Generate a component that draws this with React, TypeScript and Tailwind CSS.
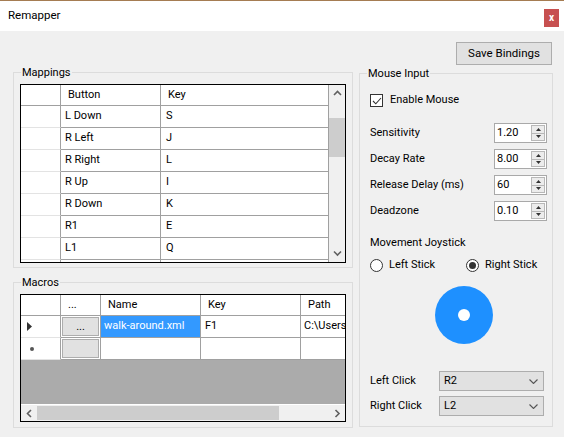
import React from 'react';

const mappings = [
  ['L Down', 'S'],
  ['R Left', 'J'],
  ['R Right', 'L'],
  ['R Up', 'I'],
  ['R Down', 'K'],
  ['R1', 'E'],
  ['L1', 'Q'],
  ['', ''],
];

const spinners = [
  ['Sensitivity', '1.20'],
  ['Decay Rate', '8.00'],
  ['Release Delay (ms)', '60'],
  ['Deadzone', '0.10'],
];

function Chevron({ dir }: { dir: 'up' | 'down' | 'left' | 'right' }) {
  const vert = dir === 'up' || dir === 'down';
  const d = {
    up: 'M1 5 L4.5 1.5 L8 5',
    down: 'M1 1.5 L4.5 5 L8 1.5',
    left: 'M5 1 L1.5 4.5 L5 8',
    right: 'M1.5 1 L5 4.5 L1.5 8',
  }[dir];
  return (
    <svg width={vert ? 9 : 7} height={vert ? 7 : 9} viewBox={vert ? '0 0 9 7' : '0 0 7 9'}>
      <path d={d} fill="none" stroke="#606060" strokeWidth="1.6" />
    </svg>
  );
}

function GroupBox({ title, className, children }: { title: string; className: string; children: React.ReactNode }) {
  return (
    <div className={`relative border border-[#dcdcdc] ${className}`}>
      <span className="absolute -top-[7px] left-[7px] bg-[#f0f0f0] px-px leading-[13px]">{title}</span>
      {children}
    </div>
  );
}

function SpinBox({ value }: { value: string }) {
  return (
    <div className="flex h-[20px] w-[53px] border border-[#a9a9a9] bg-white">
      <span className="flex flex-1 items-center pl-[2px]">{value}</span>
      <div className="my-px mr-px flex w-[14px] flex-col">
        <div className="flex flex-1 items-center justify-center border border-[#b8b8b8] bg-[#ececec]">
          <svg width="5" height="3" viewBox="0 0 5 3"><path d="M0 3 L2.5 0 L5 3 Z" fill="#333" /></svg>
        </div>
        <div className="flex flex-1 items-center justify-center border border-t-0 border-[#b8b8b8] bg-[#ececec]">
          <svg width="5" height="3" viewBox="0 0 5 3"><path d="M0 0 L2.5 3 L5 0 Z" fill="#333" /></svg>
        </div>
      </div>
    </div>
  );
}

function ComboBox({ value }: { value: string }) {
  return (
    <div className="flex h-[20px] w-[105px] items-center justify-between border border-[#adadad] bg-[#e1e1e1] pl-[4px] pr-[5px]">
      <span>{value}</span>
      <svg width="9" height="5" viewBox="0 0 9 5"><path d="M0.5 0.5 L4.5 4.5 L8.5 0.5" fill="none" stroke="#555" strokeWidth="1.1" /></svg>
    </div>
  );
}

function Radio({ label, checked }: { label: string; checked?: boolean }) {
  return (
    <div className="flex items-center gap-[6px]">
      <span className="flex h-[13px] w-[13px] items-center justify-center rounded-full border border-[#333] bg-white">
        {checked && <span className="h-[7px] w-[7px] rounded-full bg-[#333]" />}
      </span>
      <span>{label}</span>
    </div>
  );
}

export default function App() {
  return (
    <div className="h-[437px] w-[564px] overflow-hidden border-t border-[#a57c52] bg-[#f0f0f0] font-['Roboto','Liberation_Sans',sans-serif] text-[11px] text-black">
      {/* Title bar */}
      <div className="flex h-[30px] items-start justify-between bg-white pl-[8px] pr-[5px]">
        <span className="self-center text-[11.5px]">Remapper</span>
        <span className="mt-[8px] flex h-[18px] w-[15px] items-center justify-center bg-[#c75050] text-[10px] font-bold leading-none text-white">x</span>
      </div>

      {/* Toolbar */}
      <div className="flex justify-end pr-[12px] pt-[11px]">
        <button className="h-[23px] w-[96px] border border-[#adadad] bg-[#e1e1e1] text-[11.5px]">Save Bindings</button>
      </div>

      <div className="mt-[7px] flex pl-[13px]">
        {/* Left column */}
        <div className="flex w-[340px] flex-col gap-[14px]">
          <GroupBox title="Mappings" className="h-[196px] pl-[6px] pt-[11px]">
            <div className="flex h-[179px] w-[326px] overflow-hidden border border-black bg-white">
              <div className="flex w-[308px] flex-col">
                <div className="flex h-[21px] shrink-0">
                  <div className="w-[40px] border-b border-r border-[#a0a0a0]" />
                  <div className="flex w-[100px] items-center border-b border-r border-[#a0a0a0] pl-[7px]">Button</div>
                  <div className="flex w-[168px] items-center border-b border-r border-[#a0a0a0] pl-[7px]">Key</div>
                </div>
                {mappings.map(([button, key], i) => (
                  <div key={i} className="flex h-[22px] shrink-0">
                    <div className="w-[40px] border-b border-r border-b-[#e3e3e3] border-r-[#a0a0a0]" />
                    <div className="flex w-[100px] items-center border-b border-r border-[#a0a0a0] pl-[4px]">{button}</div>
                    <div className="flex w-[168px] items-center border-b border-r border-[#a0a0a0] pl-[5px]">{key}</div>
                  </div>
                ))}
              </div>
              <div className="flex w-[16px] flex-col bg-[#f0f0f0]">
                <div className="flex h-[17px] items-center justify-center"><Chevron dir="up" /></div>
                <div className="flex-1">
                  <div className="mt-[16px] h-[39px] bg-[#cdcdcd]" />
                </div>
                <div className="flex h-[17px] items-center justify-center"><Chevron dir="down" /></div>
              </div>
            </div>
          </GroupBox>

          <GroupBox title="Macros" className="h-[146px] pl-[6px] pt-[11px]">
            <div className="flex h-[128px] w-[326px] flex-col overflow-hidden border border-black bg-white">
              <div className="flex h-[21px] shrink-0">
                <div className="w-[40px] shrink-0 border-b border-r border-[#a0a0a0]" />
                <div className="flex w-[40px] shrink-0 items-center border-b border-r border-[#a0a0a0] pl-[7px]">...</div>
                <div className="flex w-[100px] shrink-0 items-center border-b border-r border-[#a0a0a0] pl-[7px]">Name</div>
                <div className="flex w-[100px] shrink-0 items-center border-b border-r border-[#a0a0a0] pl-[7px]">Key</div>
                <div className="flex flex-1 items-center border-b border-[#a0a0a0] pl-[7px]">Path</div>
              </div>
              <div className="flex h-[22px] shrink-0">
                <div className="flex w-[40px] shrink-0 items-center border-b border-r border-b-[#e3e3e3] border-r-[#a0a0a0] pl-[6px]">
                  <svg width="5" height="9" viewBox="0 0 5 9"><path d="M0 0 L5 4.5 L0 9 Z" fill="#333" /></svg>
                </div>
                <div className="flex w-[40px] shrink-0 border-b border-r border-[#a0a0a0] p-px">
                  <div className="flex flex-1 items-center justify-center border border-[#adadad] bg-[#e1e1e1] leading-none">...</div>
                </div>
                <div className="flex w-[100px] shrink-0 items-center border-b border-r border-[#a0a0a0] bg-[#3399ff] pl-[3px] text-white">walk-around.xml</div>
                <div className="flex w-[100px] shrink-0 items-center border-b border-r border-[#a0a0a0] pl-[4px]">F1</div>
                <div className="flex flex-1 items-center overflow-hidden whitespace-nowrap border-b border-[#a0a0a0] pl-[3px]">C:\Users</div>
              </div>
              <div className="flex h-[22px] shrink-0">
                <div className="flex w-[40px] shrink-0 items-center border-b border-r border-b-[#e3e3e3] border-r-[#a0a0a0] pl-[9px]">
                  <span className="h-[4px] w-[4px] rounded-full bg-[#555]" />
                </div>
                <div className="flex w-[40px] shrink-0 border-b border-r border-[#a0a0a0] p-px">
                  <div className="flex-1 border border-[#adadad] bg-[#e1e1e1]" />
                </div>
                <div className="w-[100px] shrink-0 border-b border-r border-[#a0a0a0]" />
                <div className="w-[100px] shrink-0 border-b border-r border-[#a0a0a0]" />
                <div className="flex-1 border-b border-[#a0a0a0]" />
              </div>
              <div className="flex-1 bg-[#ababab]" />
              <div className="flex h-[17px] shrink-0 border-t border-white bg-[#f0f0f0]">
                <div className="flex w-[16px] items-center justify-center"><Chevron dir="left" /></div>
                <div className="flex-1 py-px">
                  <div className="h-full w-[242px] bg-[#cdcdcd]" />
                </div>
                <div className="flex w-[16px] items-center justify-center"><Chevron dir="right" /></div>
              </div>
            </div>
          </GroupBox>
        </div>

        {/* Right column */}
        <GroupBox title="Mouse Input" className="ml-[6px] mt-px flex h-[354px] w-[194px] flex-col pl-[10px]">
          <div className="mt-[20px] flex h-[13px] items-center gap-[7px]">
            <span className="flex h-[13px] w-[13px] items-center justify-center border border-[#333] bg-white">
              <svg width="10" height="8" viewBox="0 0 10 8"><path d="M1 4 L3.8 6.8 L9 1" fill="none" stroke="#333" strokeWidth="1.1" /></svg>
            </span>
            <span>Enable Mouse</span>
          </div>

          <div className="mt-[16px] flex flex-col gap-[6px] pr-[5px]">
            {spinners.map(([label, value]) => (
              <div key={label} className="flex items-center justify-between">
                <span>{label}</span>
                <SpinBox value={value} />
              </div>
            ))}
          </div>

          <div className="mt-[15px] flex h-[14px] items-center">Movement Joystick</div>

          <div className="mt-[9px] flex h-[13px] items-center gap-[31px]">
            <Radio label="Left Stick" />
            <Radio label="Right Stick" checked />
          </div>

          <div className="mt-[14px] pl-[65px]">
            <div className="flex h-[58px] w-[58px] items-center justify-center rounded-full bg-[#1e90ff]">
              <div className="h-[12px] w-[12px] rounded-full bg-white" />
            </div>
          </div>

          <div className="mt-[27px] flex flex-col gap-[5px] pr-[8px]">
            <div className="flex items-center justify-between">
              <span>Left Click</span>
              <ComboBox value="R2" />
            </div>
            <div className="flex items-center justify-between">
              <span>Right Click</span>
              <ComboBox value="L2" />
            </div>
          </div>
        </GroupBox>
      </div>
    </div>
  );
}
